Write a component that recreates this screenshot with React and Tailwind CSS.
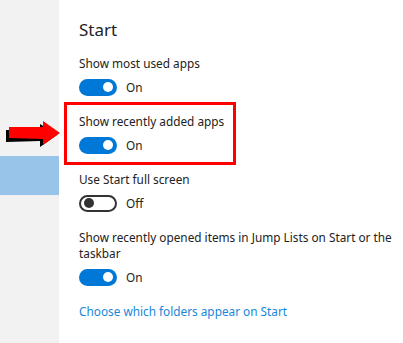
import { useState } from 'react'

const ITEMS = [
  { label: 'Show most used apps', on: true },
  { label: 'Show recently added apps', on: true },
  { label: 'Use Start full screen', on: false },
  { label: 'Show recently opened items in Jump Lists on Start or the taskbar', on: true },
]

function Toggle({ on, onClick }) {
  return (
    <button
      type="button"
      onClick={onClick}
      className={
        on
          ? 'w-[38px] h-[17px] rounded-full bg-[#0078d7] flex items-center justify-end pr-[4px]'
          : 'w-[38px] h-[17px] rounded-full border-2 border-[#333333] bg-white flex items-center justify-start pl-[3px]'
      }
    >
      <span className={on ? 'w-[10px] h-[10px] rounded-full bg-white' : 'w-[10px] h-[10px] rounded-full bg-[#333333]'} />
    </button>
  )
}

function Arrow() {
  return (
    <svg width="64" height="32" viewBox="0 0 64 32" className="absolute left-0 top-[118px]">
      <polygon points="6,12 40,12 40,6 57,17 40,29 40,23 6,24" fill="#000" />
      <polygon points="9,9 43,9 43,3 60,15 43,27 43,21 9,20" fill="#ff0000" />
    </svg>
  )
}

export default function App() {
  const [state, setState] = useState(ITEMS.map(i => i.on))
  const flip = (idx) => setState(prev => prev.map((v, i) => (i === idx ? !v : v)))

  return (
    <div className="relative w-[403px] h-[343px] flex bg-white overflow-hidden font-['Noto_Sans',sans-serif] text-[#222222]">
      <div className="w-[59px] shrink-0 bg-[#f2f2f2] flex flex-col">
        <div className="h-[156px]" />
        <div className="h-[39px] bg-[#99c4e9]" />
      </div>
      <div className="flex-1 pl-[20px] pt-[18px]">
        <h1 className="text-[17px] leading-[24px] font-normal">Start</h1>
        <div className="mt-[13px] flex flex-col gap-[16px]">
          {ITEMS.map((item, i) => (
            <div key={item.label} className="flex flex-col gap-[6px]">
              <div className="text-[11.8px] leading-[16px]">{item.label}</div>
              <div className="h-[20px] flex items-center gap-[9px]">
                <Toggle on={state[i]} onClick={() => flip(i)} />
                <span className="text-[11.8px] leading-[16px]">{state[i] ? 'On' : 'Off'}</span>
              </div>
            </div>
          ))}
          <a href="#" className="text-[11.8px] leading-[16px] text-[#1a86d9]">Choose which folders appear on Start</a>
        </div>
      </div>
      <div className="absolute left-[64px] top-[102px] w-[172px] h-[63px] border-[3px] border-[#ff0000]" />
      <Arrow />
    </div>
  )
}
